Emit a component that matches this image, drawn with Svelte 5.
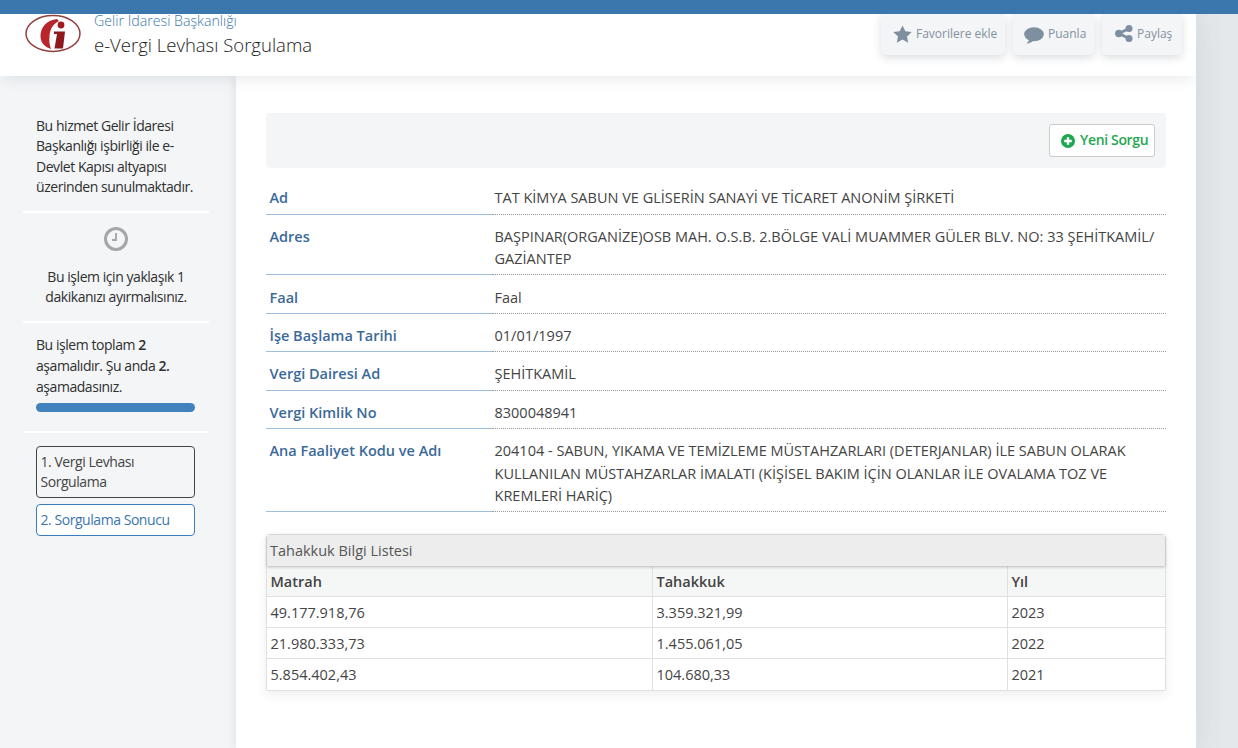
<script>
  const info = [
    { k: 'Ad', v: 'TAT KİMYA SABUN VE GLİSERİN SANAYİ VE TİCARET ANONİM ŞİRKETİ' },
    { k: 'Adres', v: 'BAŞPINAR(ORGANİZE)OSB MAH. O.S.B. 2.BÖLGE VALİ MUAMMER GÜLER BLV. NO: 33 ŞEHİTKAMİL/ GAZİANTEP' },
    { k: 'Faal', v: 'Faal' },
    { k: 'İşe Başlama Tarihi', v: '01/01/1997' },
    { k: 'Vergi Dairesi Ad', v: 'ŞEHİTKAMİL' },
    { k: 'Vergi Kimlik No', v: '8300048941' },
    { k: 'Ana Faaliyet Kodu ve Adı', v: '204104 - SABUN, YIKAMA VE TEMİZLEME MÜSTAHZARLARI (DETERJANLAR) İLE SABUN OLARAK KULLANILAN MÜSTAHZARLAR İMALATI (KİŞİSEL BAKIM İÇİN OLANLAR İLE OVALAMA TOZ VE KREMLERİ HARİÇ)' }
  ];
  const rows = [
    ['49.177.918,76', '3.359.321,99', '2023'],
    ['21.980.333,73', '1.455.061,05', '2022'],
    ['5.854.402,43', '104.680,33', '2021']
  ];
</script>

<div class="topbar"></div>
<div class="page">
  <header class="head">
    <div class="brand">
      <svg class="logo" viewBox="0 0 58 40" width="58" height="40" aria-hidden="true">
        <ellipse cx="29" cy="19.5" rx="27" ry="18" fill="#fff" stroke="#94403f" stroke-width="1.5" />
        <path d="M33 5 C23 6 16.5 13 16.5 22 C16.5 28 20 33 27 35 C25.5 31 25 27 25.5 22 C26 15 29 10 35 7 Z" fill="#b8252a" />
        <circle cx="37" cy="11" r="3.4" fill="#a01a20" />
        <path d="M30 17.5 L41 17.5 L39 34.5 L30.5 34.5 L33 20 L30 20 Z" fill="#8e1a1d" />
      </svg>
      <div class="titles">
        <div class="org">Gelir İdaresi Başkanlığı</div>
        <div class="title">e-Vergi Levhası Sorgulama</div>
      </div>
    </div>
    <div class="actions">
      <button class="act fav">
        <svg width="19" height="18" viewBox="0 0 19 18" aria-hidden="true"><path d="M9.5 0.4 L12.3 6.2 L18.7 7 L14 11.4 L15.2 17.7 L9.5 14.6 L3.8 17.7 L5 11.4 L0.3 7 L6.7 6.2 Z" fill="#7f8f9f" /></svg>
        Favorilere ekle
      </button>
      <button class="act rate">
        <svg class="bubble" width="20" height="17" viewBox="0 0 20 17" aria-hidden="true"><ellipse cx="10" cy="7.2" rx="9.8" ry="7" fill="#7f8f9f" /><path d="M5 12 C5 14 3.5 15.5 2.5 16.8 C5.5 16.5 8 15 10 13 Z" fill="#7f8f9f" /></svg>
        Puanla
      </button>
      <button class="act share">
        <svg width="18" height="17" viewBox="0 0 18 17" aria-hidden="true"><path d="M14 3.6 L4 8.5 L14 13.4" fill="none" stroke="#7f8f9f" stroke-width="2.8" /><circle cx="14" cy="3.6" r="3.5" fill="#7f8f9f" /><circle cx="3.8" cy="8.5" r="3.7" fill="#7f8f9f" /><circle cx="14" cy="13.4" r="3.5" fill="#7f8f9f" /></svg>
        Paylaş
      </button>
    </div>
  </header>

  <div class="body">
    <aside class="side">
      <p class="block">Bu hizmet Gelir İdaresi Başkanlığı işbirliği ile e-Devlet Kapısı altyapısı üzerinden sunulmaktadır.</p>
      <hr class="h1" />
      <div class="clock">
        <svg width="24" height="24" viewBox="0 0 24 24" aria-hidden="true"><circle cx="12" cy="12" r="10.5" fill="none" stroke="#a4a6a8" stroke-width="3" /><path d="M12 6 V13 H8" fill="none" stroke="#a4a6a8" stroke-width="1.8" /></svg>
      </div>
      <p class="center">Bu işlem için yaklaşık 1 dakikanızı ayırmalısınız.</p>
      <hr class="h1" />
      <p class="block stage">Bu işlem toplam <b>2</b> aşamalıdır. Şu anda <b>2.</b> aşamadasınız.</p>
      <div class="bar"></div>
      <hr class="last" />
      <div class="step">1. Vergi Levhası Sorgulama</div>
      <div class="step on">2. Sorgulama Sonucu</div>
    </aside>

    <main class="main">
      <div class="tools">
        <button class="new">
          <svg width="14" height="14" viewBox="0 0 14 14" aria-hidden="true"><circle cx="7" cy="7" r="7" fill="#1fa750" /><path d="M7 3.2 V10.8 M3.2 7 H10.8" stroke="#fff" stroke-width="2.4" /></svg>
          Yeni Sorgu
        </button>
      </div>

      <div class="info">
        {#each info as r}
          <div class="row">
            <div class="k">{r.k}</div>
            <div class="v">{r.v}</div>
          </div>
        {/each}
      </div>

      <section class="panel">
        <div class="ptitle">Tahakkuk Bilgi Listesi</div>
        <table>
          <colgroup><col class="c1" /><col class="c2" /><col /></colgroup>
          <thead><tr><th>Matrah</th><th>Tahakkuk</th><th>Yıl</th></tr></thead>
          <tbody>
            {#each rows as r}
              <tr><td>{r[0]}</td><td>{r[1]}</td><td>{r[2]}</td></tr>
            {/each}
          </tbody>
        </table>
      </section>
    </main>
  </div>
</div>

<style>
  :global(body) {
    margin: 0;
    background: #e4e8eb;
    font-family: "Open Sans", "Liberation Sans", sans-serif;
    font-size: 14.5px;
    color: #333;
    overflow: hidden;
  }
  .topbar {
    height: 14px;
    background: #3b76ad;
    position: relative;
    z-index: 3;
  }
  .page {
    width: 1196px;
    height: 734px;
    display: flex;
    flex-direction: column;
    box-shadow: 0 0 30px rgba(60, 70, 85, 0.12);
    overflow: hidden;
  }
  .head {
    height: 62px;
    flex: none;
    background: #fff;
    display: flex;
    justify-content: space-between;
    box-shadow: 0 4px 16px -4px rgba(40, 50, 70, 0.14);
    position: relative;
    z-index: 2;
    padding-right: 14px;
    box-sizing: border-box;
  }
  .brand {
    display: flex;
    padding-left: 24px;
    height: 62px;
    overflow: hidden;
  }
  .logo {
    flex: none;
  }
  .titles {
    margin-left: 12px;
  }
  .org {
    font-weight: 300;
    font-size: 14.2px;
    line-height: 14px;
    color: #3b76ad;
  }
  .title {
    font-weight: 300;
    font-size: 18.5px;
    line-height: 30px;
    color: #1c1c1c;
    margin-top: 2px;
  }
  .actions {
    display: flex;
    gap: 8px;
  }
  .act {
    height: 41px;
    border: 0;
    border-radius: 0 0 5px 5px;
    background: #f3f5f7;
    box-shadow: 0 3px 8px rgba(40, 50, 70, 0.16);
    color: #84919f;
    font: 400 12px "Open Sans", sans-serif;
    display: flex;
    align-items: center;
    gap: 4px;
    padding: 0 0 2px;
    justify-content: flex-start;
  }
  .bubble { margin-top: 3px; }
  .fav { width: 124px; padding-left: 12px; }
  .rate { width: 81px; padding-left: 11px; }
  .share { width: 80px; padding-left: 13px; }
  .body {
    flex: 1;
    display: flex;
    min-height: 0;
  }
  .side {
    width: 236px;
    flex: none;
    box-sizing: border-box;
    background: #f3f5f7;
    padding: 40px 27px 0 23px;
    font-size: 14px;
    letter-spacing: -0.45px;
    color: #2f2f2f;
  }
  p {
    margin: 0;
    line-height: 20.4px;
  }
  .block {
    padding: 0 10px 0 13px;
  }
  hr {
    border: 0;
    height: 2px;
    background: #fff;
    margin: 0;
  }
  hr.h1 { margin-top: 13.4px; }
  .clock {
    margin-top: 14px;
    height: 24px;
  }
  .clock svg { display: block; margin: 0 auto; }
  .center {
    text-align: center;
    margin-top: 15.8px;
    padding: 0 13px;
  }
  .stage { margin-top: 12.4px; line-height: 20.6px; }
  .stage b { font-weight: 600; }
  .bar {
    height: 9px;
    margin: 5.8px 14px 0 13px;
    border-radius: 5px;
    background: #4182bd;
  }
  hr.last { margin-top: 19px; }
  .step {
    margin: 13px 14px 0 13px;
    padding: 5px 3.5px;
    border: 1px solid #444;
    border-radius: 4px;
    line-height: 20px;
    color: #444;
  }
  .step.on {
    margin-top: 6px;
    border-color: #3b7dbd;
    background: #fff;
    color: #3b76ad;
  }
  .main {
    flex: 1;
    background: #fff;
    padding: 37px 30px 0;
    box-shadow: -3px 0 8px rgba(40, 50, 70, 0.07);
    position: relative;
    z-index: 1;
  }
  .tools {
    height: 55px;
    box-sizing: border-box;
    background: #f3f5f7;
    border-radius: 4px;
    display: flex;
    justify-content: flex-end;
    align-items: center;
    padding-right: 11px;
  }
  .new {
    height: 33px;
    width: 106px;
    box-sizing: border-box;
    background: #fff;
    border: 1px solid #ccc;
    border-radius: 3px;
    color: #1fa750;
    font: 600 14px "Open Sans", sans-serif;
    letter-spacing: -0.35px;
    line-height: 18px;
    display: flex;
    align-items: center;
    gap: 5px;
    padding: 0 0 2px 11px;
  }
  .new svg { margin-top: 2px; }
  .info { margin-top: 8.3px; }
  .row {
    display: flex;
    line-height: 22.4px;
  }
  .k {
    width: 226px;
    flex: none;
    box-sizing: border-box;
    padding: 11.2px 3px 3.8px 3.5px;
    border-bottom: 1px solid #9dbfdd;
    color: #3b6a9a;
    font-weight: 600;
  }
  .v {
    flex: 1;
    padding: 11.2px 3px 3.8px 2.5px;
    border-bottom: 1px dotted #999;
    color: #444;
  }
  .panel {
    margin-top: 22px;
    border: 1px solid #e0e0e0;
    border-radius: 4px 4px 0 0;
    box-shadow: 0 4px 12px rgba(40, 50, 70, 0.08);
  }
  .ptitle {
    height: 30.7px;
    line-height: 32px;
    padding-left: 3px;
    background: #ededed;
    color: #555;
    box-shadow: 0 1px 3px rgba(0, 0, 0, 0.25);
    position: relative;
  }
  table {
    width: 100%;
    border-collapse: collapse;
    table-layout: fixed;
    color: #444;
  }
  .c1 { width: 385.5px; }
  .c2 { width: 355px; }
  th, td {
    height: 31px;
    box-sizing: border-box;
    padding: 0 3.5px;
    text-align: left;
    border: 1px solid #e0e0e0;
    border-top: 0;
  }
  th {
    background: #f5f7f7;
    font-weight: 600;
  }
  tr > :first-child { border-left: 0; }
  tr > :last-child { border-right: 0; }
  tbody tr:last-child td { border-bottom: 0; }
</style>
